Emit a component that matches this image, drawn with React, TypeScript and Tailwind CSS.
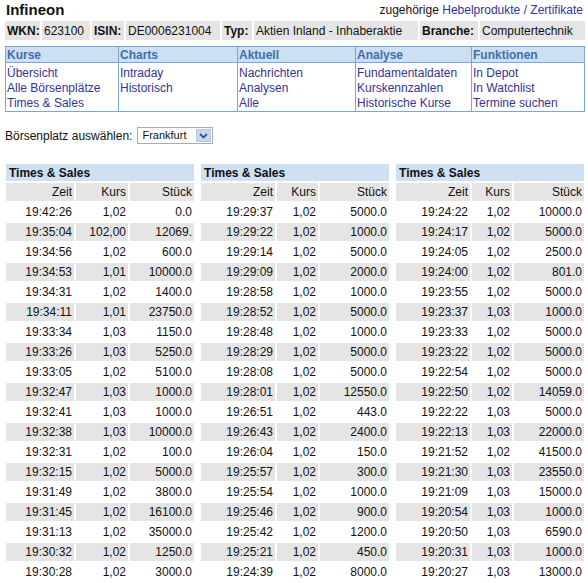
import React from "react";

type Row = [string, string, string];

const t1: Row[] = [
  ["19:42:26", "1,02", "0.0"],
  ["19:35:04", "102,00", "12069."],
  ["19:34:56", "1,02", "600.0"],
  ["19:34:53", "1,01", "10000.0"],
  ["19:34:31", "1,02", "1400.0"],
  ["19:34:11", "1,01", "23750.0"],
  ["19:33:34", "1,03", "1150.0"],
  ["19:33:26", "1,03", "5250.0"],
  ["19:33:05", "1,02", "5100.0"],
  ["19:32:47", "1,03", "1000.0"],
  ["19:32:41", "1,03", "1000.0"],
  ["19:32:38", "1,03", "10000.0"],
  ["19:32:31", "1,02", "100.0"],
  ["19:32:15", "1,02", "5000.0"],
  ["19:31:49", "1,02", "3800.0"],
  ["19:31:45", "1,02", "16100.0"],
  ["19:31:13", "1,02", "35000.0"],
  ["19:30:32", "1,02", "1250.0"],
  ["19:30:28", "1,02", "3000.0"],
  ["\u00a0", "\u00a0", "\u00a0"],
];

const t2: Row[] = [
  ["19:29:37", "1,02", "5000.0"],
  ["19:29:22", "1,02", "1000.0"],
  ["19:29:14", "1,02", "5000.0"],
  ["19:29:09", "1,02", "2000.0"],
  ["19:28:58", "1,02", "1000.0"],
  ["19:28:52", "1,02", "5000.0"],
  ["19:28:48", "1,02", "1000.0"],
  ["19:28:29", "1,02", "5000.0"],
  ["19:28:08", "1,02", "5000.0"],
  ["19:28:01", "1,02", "12550.0"],
  ["19:26:51", "1,02", "443.0"],
  ["19:26:43", "1,02", "2400.0"],
  ["19:26:04", "1,02", "150.0"],
  ["19:25:57", "1,02", "300.0"],
  ["19:25:54", "1,02", "1000.0"],
  ["19:25:46", "1,02", "900.0"],
  ["19:25:42", "1,02", "1200.0"],
  ["19:25:21", "1,02", "450.0"],
  ["19:24:39", "1,02", "8000.0"],
  ["\u00a0", "\u00a0", "\u00a0"],
];

const t3: Row[] = [
  ["19:24:22", "1,02", "10000.0"],
  ["19:24:17", "1,02", "5000.0"],
  ["19:24:05", "1,02", "2500.0"],
  ["19:24:00", "1,02", "801.0"],
  ["19:23:55", "1,02", "5000.0"],
  ["19:23:37", "1,03", "1000.0"],
  ["19:23:33", "1,02", "5000.0"],
  ["19:23:22", "1,02", "5000.0"],
  ["19:22:54", "1,02", "5000.0"],
  ["19:22:50", "1,02", "14059.0"],
  ["19:22:22", "1,03", "5000.0"],
  ["19:22:13", "1,03", "22000.0"],
  ["19:21:52", "1,02", "41500.0"],
  ["19:21:30", "1,03", "23550.0"],
  ["19:21:09", "1,03", "15000.0"],
  ["19:20:54", "1,03", "1000.0"],
  ["19:20:50", "1,03", "6590.0"],
  ["19:20:31", "1,03", "1000.0"],
  ["19:20:27", "1,03", "13000.0"],
  ["\u00a0", "\u00a0", "\u00a0"],
];

function SalesTable({ rows, w }: { rows: Row[]; w: [number, number, number] }) {
  return (
    <table className="w-[192px] border-separate border-spacing-[2px] table-fixed">
      <colgroup>
        <col style={{ width: w[0] }} />
        <col style={{ width: w[1] }} />
        <col style={{ width: w[2] }} />
      </colgroup>
      <tbody>
        <tr>
          <th colSpan={3} className="h-[17px] p-0 pl-[3px] text-left font-bold bg-[#cfe0f3] leading-[14px] text-[#111]">
            Times &amp; Sales
          </th>
        </tr>
        <tr>
          <td className="h-[18px] p-0 pr-[2px] text-right bg-[#e5e5e5] leading-[14px]">Zeit</td>
          <td className="h-[18px] p-0 pr-[2px] text-right bg-[#e5e5e5] leading-[14px]">Kurs</td>
          <td className="h-[18px] p-0 pr-[2px] text-right bg-[#e5e5e5] leading-[14px]">Stück</td>
        </tr>
        {rows.map((r, i) => (
          <tr key={i} className={i % 2 === 1 ? "bg-[#e5e5e5]" : "bg-white"}>
            <td className="h-[18px] p-0 pr-[2px] text-right leading-[14px] whitespace-nowrap overflow-hidden">{r[0]}</td>
            <td className="h-[18px] p-0 pr-[2px] text-right leading-[14px] whitespace-nowrap overflow-hidden">{r[1]}</td>
            <td className="h-[18px] p-0 pr-[2px] text-right leading-[14px] whitespace-nowrap overflow-hidden">{r[2]}</td>
          </tr>
        ))}
      </tbody>
    </table>
  );
}

const navCols: { title: string; links: string[] }[] = [
  { title: "Kurse", links: ["Übersicht", "Alle Börsenplätze", "Times & Sales"] },
  { title: "Charts", links: ["Intraday", "Historisch"] },
  { title: "Aktuell", links: ["Nachrichten", "Analysen", "Alle"] },
  { title: "Analyse", links: ["Fundamentaldaten", "Kurskennzahlen", "Historische Kurse"] },
  { title: "Funktionen", links: ["In Depot", "In Watchlist", "Termine suchen"] },
];

const info: { t: string; b?: boolean; w: number }[] = [
  { t: "WKN:", b: true, w: 35 },
  { t: "623100", w: 48 },
  { t: "ISIN:", b: true, w: 32 },
  { t: "DE0006231004", w: 94 },
  { t: "Typ:", b: true, w: 30 },
  { t: "Aktien Inland - Inhaberaktie", w: 164 },
  { t: "Branche:", b: true, w: 58 },
  { t: "Computertechnik", w: 105 },
];

export default function App() {
  return (
    <div className="w-[588px] h-[583px] overflow-hidden bg-white text-[12px] text-[#111] font-['Liberation_Sans',Arial,sans-serif]">
      {/* Title row */}
      <div className="flex h-[20px] items-center justify-between pl-[6px] pr-[5px]">
        <div className="text-[15px] font-bold leading-[16px]">Infineon</div>
        <div className="leading-[14px]">
          zugehörige <span className="text-[#333399]">Hebelprodukte</span>{" "}
          <span className="text-[#333366]">/</span>{" "}
          <span className="text-[#333399]">Zertifikate</span>
        </div>
      </div>

      {/* Info row */}
      <div className="mt-[1px] flex gap-[2px] pl-[5px]">
        {info.map((c, i) => (
          <div
            key={i}
            style={{ width: c.w }}
            className={`h-[19px] flex items-center pl-[2px] bg-[#e5e5e5] whitespace-nowrap ${c.b ? "font-bold" : ""}`}
          >
            {c.t}
          </div>
        ))}
      </div>

      {/* Nav */}
      <div className="mt-[6px] ml-[5px] w-[580px] border border-[#7fa5d6] grid grid-cols-[112px_119px_118px_116px_1fr]">
        {navCols.map((c, i) => (
          <div key={i} className={i > 0 ? "border-l border-[#7fa5d6]" : ""}>
            <div className="h-[16px] border-b border-[#7fa5d6] bg-[#cddff3] pl-[1px] pt-[1px] font-bold text-[#3f6fae] leading-[15px]">
              {c.title}
            </div>
            <div className="pt-[3px] pl-[1px] h-[48px] leading-[15px] text-[#333399]">
              {c.links.map((l) => (
                <div key={l}>{l}</div>
              ))}
            </div>
          </div>
        ))}
      </div>

      {/* Börsenplatz */}
      <div className="mt-[15px] flex h-[17px] items-center pl-[5px]">
        <span className="leading-[14px]">Börsenplatz auswählen:</span>
        <div className="ml-[5px] flex h-[17px] w-[76px] items-center border border-[#a5acb5] bg-white">
          <span className="flex-1 pl-[4px] text-[11px] leading-[13px]">Frankfurt</span>
          <span className="mr-[1px] flex h-[13px] w-[15px] items-center justify-center border border-[#b8c9de] bg-[#c7d8ee]">
            <svg width="9" height="6" viewBox="0 0 9 6">
              <path d="M1 1 L4.5 4.5 L8 1" fill="none" stroke="#3d5488" strokeWidth="1.8" />
            </svg>
          </span>
        </div>
      </div>

      {/* Tables */}
      <div className="mt-[18px] flex gap-[3px] pl-[4px]">
        <SalesTable rows={t1} w={[68, 52, 64]} />
        <SalesTable rows={t2} w={[74, 41, 69]} />
        <SalesTable rows={t3} w={[74, 40, 70]} />
      </div>
    </div>
  );
}
